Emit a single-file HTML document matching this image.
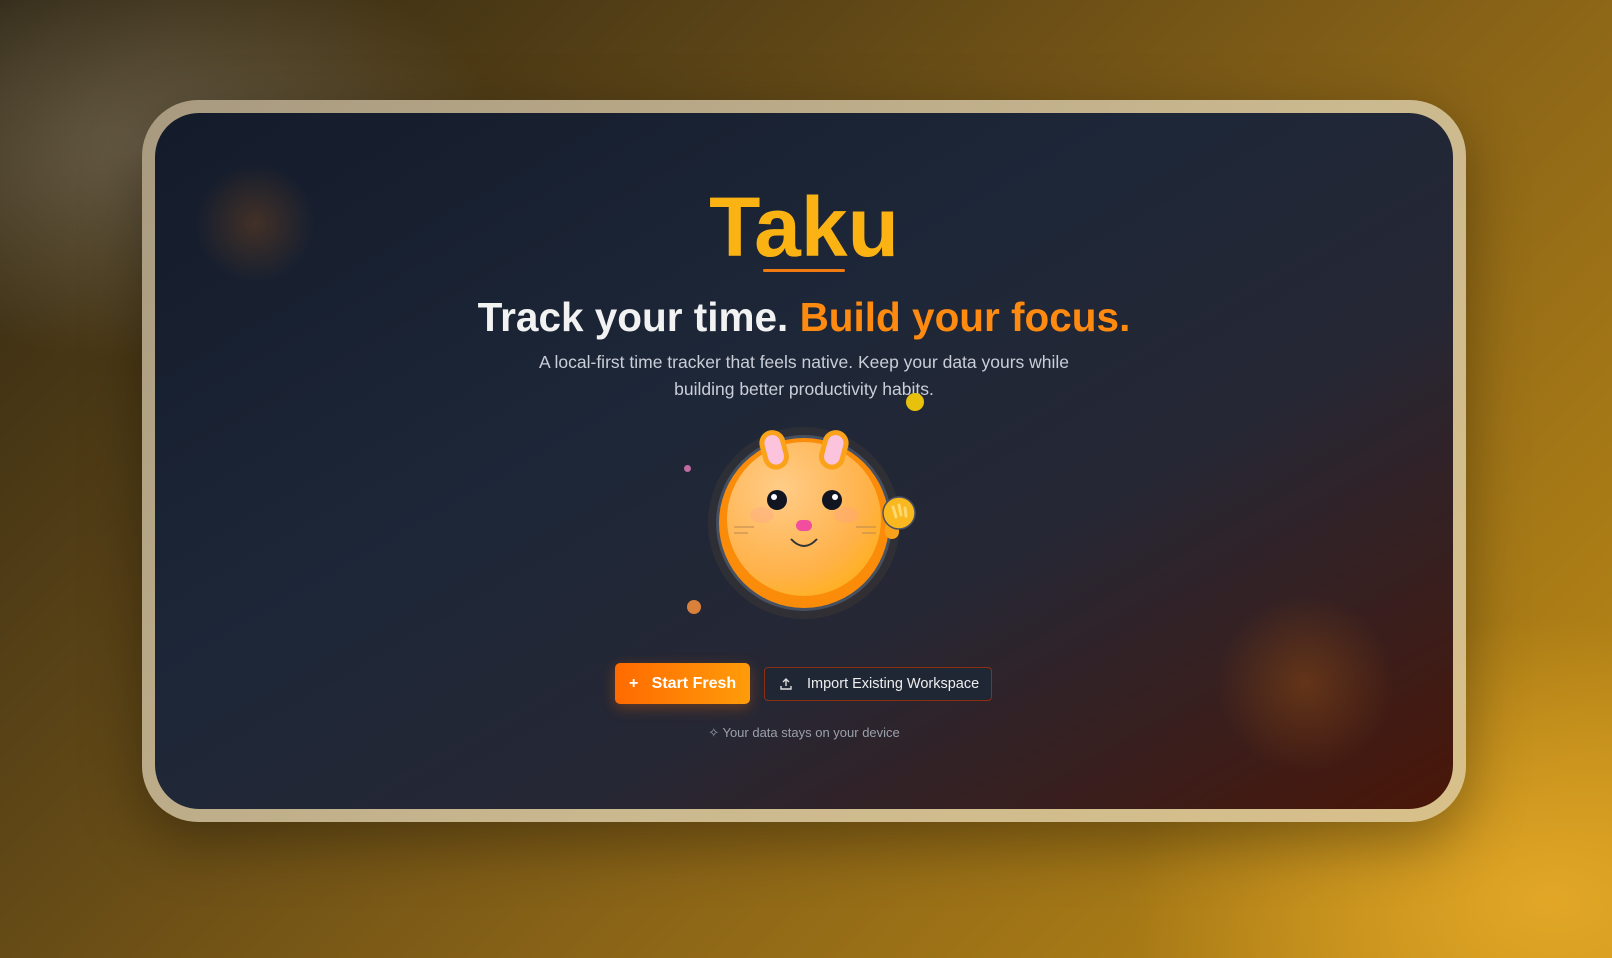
<!DOCTYPE html>
<html><head><style>
*{margin:0;padding:0;box-sizing:border-box}
html,body{width:1612px;height:958px;overflow:hidden}
body{font-family:"Liberation Sans",sans-serif;position:relative;
background:radial-gradient(ellipse 500px 300px at 150px 150px,rgba(120,110,90,.7),transparent 70%),
radial-gradient(ellipse 600px 400px at 1550px 900px,rgba(230,170,40,.9),transparent 70%),
linear-gradient(135deg,#2e2614 0%,#5a4316 30%,#8a6417 60%,#c18d16 100%);}
.frame{position:absolute;left:142px;top:100px;width:1324px;height:722px;border-radius:56px;
background:linear-gradient(135deg,#a89a80,#cbb98f 60%,#d8c08a);box-shadow:0 20px 60px rgba(0,0,0,.35)}
.card{position:absolute;left:155px;top:113px;width:1298px;height:696px;border-radius:44px;overflow:hidden;
background:linear-gradient(150deg,#141b2a 0%,#1d2738 40%,#262734 65%,#3a1e1c 85%,#4a1608 100%)}
.glow1{position:absolute;left:40px;top:50px;width:120px;height:120px;border-radius:50%;background:radial-gradient(circle,rgba(120,70,30,.45),transparent 70%)}
.glow2{position:absolute;left:1060px;top:480px;width:180px;height:180px;border-radius:50%;background:radial-gradient(circle,rgba(150,80,20,.45),transparent 70%)}
.c{position:absolute;left:0;width:100%;text-align:center}
.ul{position:absolute;left:608px;top:156px;width:82px;height:3px;background:#f07b10;border-radius:2px}
.sub{top:236px;font-size:17.5px;color:#c9ced8;line-height:27px}
.btn1{position:absolute;left:460px;top:550px;width:135px;height:41px;border-radius:5px;background:linear-gradient(90deg,#ff6a00,#ff9c0a);color:#fff;font-size:16px;font-weight:700;line-height:41px;padding-left:14px;box-shadow:0 4px 14px rgba(255,110,0,.3)}
.btn2{position:absolute;left:609px;top:554px;width:228px;height:34px;border-radius:4px;border:1px solid #8c2f10;background:#1f2634;color:#eee;font-size:14.5px;line-height:32px;padding-left:42px}
.foot{top:612px;font-size:13px;color:#9aa0ab}
.dot{position:absolute;border-radius:50%}
</style></head><body>
<div class="frame"></div>
<div class="card">
<div class="glow1"></div><div class="glow2"></div>
<div class="c" style="top:64px"><h1 style="font-size:84px;font-weight:700;color:#fbb213;line-height:100px">Taku</h1></div>
<div class="ul"></div>
<div class="c" style="top:177px"><h2 style="font-size:40.5px;font-weight:700;color:#f2f2f2;line-height:54px">Track your time. <span style="color:#ff8a10">Build your focus.</span></h2></div>
<div class="c sub">A local-first time tracker that feels native. Keep your data yours while<br>building better productivity habits.</div>
<div class="dot" style="left:751px;top:280px;width:18px;height:18px;background:#e8c10d"></div>
<div class="dot" style="left:529px;top:352px;width:7px;height:7px;background:#c06aa0"></div>
<div class="dot" style="left:532px;top:487px;width:14px;height:14px;background:#d9803a"></div>
<svg style="position:absolute;left:549px;top:310px" width="230" height="200" viewBox="0 0 230 200">
<defs><radialGradient id="g" cx=".35" cy=".3" r=".8"><stop offset="0" stop-color="#ffcc88"/><stop offset=".7" stop-color="#ffb24a"/><stop offset="1" stop-color="#ffb01a"/></radialGradient></defs>
<circle cx="100" cy="100" r="96" fill="rgba(255,190,60,.06)"/>
<circle cx="100" cy="100" r="88" fill="#465060"/>
<circle cx="100" cy="100" r="85" fill="#fa8c0a"/>
<circle cx="100" cy="96" r="77" fill="url(#g)"/>
<g transform="rotate(-15 70 30)"><rect x="58" y="7" width="26" height="40" rx="13" fill="#f9a21a"/><rect x="63" y="12" width="16" height="30" rx="8" fill="#fbc4dc"/></g>
<g transform="rotate(15 130 30)"><rect x="116" y="7" width="26" height="40" rx="13" fill="#f9a21a"/><rect x="121" y="12" width="16" height="30" rx="8" fill="#fbc4dc"/></g>
<circle cx="73" cy="77" r="10" fill="#111522"/><circle cx="70" cy="74" r="3" fill="#fff"/>
<circle cx="128" cy="77" r="10" fill="#111522"/><circle cx="131" cy="74" r="3" fill="#fff"/>
<ellipse cx="58" cy="92" rx="12" ry="8" fill="rgba(255,150,150,.25)"/><ellipse cx="142" cy="92" rx="12" ry="8" fill="rgba(255,150,150,.25)"/>
<rect x="92" y="97" width="16" height="11" rx="5.5" fill="#f24ea0"/>
<path d="M87 116 Q100 130 113 116" stroke="#333" stroke-width="2" fill="none"/>
<path d="M30 104h20M30 110h14M152 104h20M158 110h14" stroke="#b98850" stroke-width="1"/>
<rect x="181" y="98" width="14" height="18" rx="7" fill="#f7a21a"/>
<circle cx="195" cy="90" r="16" fill="#f9b820" stroke="#4a5262" stroke-width="1.5"/>
<path d="M189 84l3 10M195 82l2 10M201 85l1 8" stroke="#ffd870" stroke-width="3" stroke-linecap="round"/>
</svg>
<div class="btn1">+ &nbsp;&nbsp;Start Fresh</div>
<div class="btn2"><svg style="position:absolute;left:14px;top:9px" width="14" height="14" viewBox="0 0 14 14" fill="none" stroke="#ddd" stroke-width="1.4"><path d="M7 9V2M4 5l3-3 3 3M2 9v3h10V9"/></svg>Import Existing Workspace</div>
<div class="c foot">✧ Your data stays on your device</div>
</div>
</body></html>
